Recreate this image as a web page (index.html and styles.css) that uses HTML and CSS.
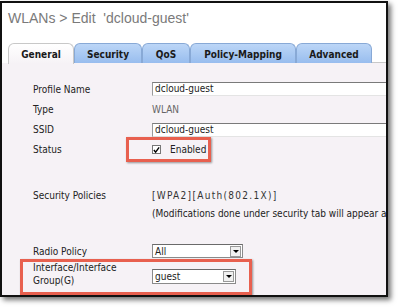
FILE: index.html
```html
<!DOCTYPE html>
<html>
<head>
<meta charset="utf-8">
<link rel="stylesheet" href="styles.css">
</head>
<body>
<div class="frame">
  <div class="header">
    <div class="title">WLANs &gt; Edit &nbsp;'dcloud-guest'</div>
    <div class="tabs">
      <div class="tab active t-general">General</div>
      <div class="tab t-security">Security</div>
      <div class="tab t-qos">QoS</div>
      <div class="tab t-policy">Policy-Mapping</div>
      <div class="tab t-adv">Advanced</div>
      <div class="tab-fill"></div>
    </div>
  </div>
  <div class="content">
    <div class="row r-profile"><div class="label">Profile Name</div><div class="value"><div class="input">dcloud-guest</div></div></div>
    <div class="row r-type"><div class="label">Type</div><div class="value muted">WLAN</div></div>
    <div class="row r-ssid"><div class="label">SSID</div><div class="value"><div class="input">dcloud-guest</div></div></div>
    <div class="row r-status"><div class="label">Status</div><div class="value"><span class="check"><svg width="8" height="8" viewBox="0 0 8 8"><polyline points="1,4 3,6.5 7,1" fill="none" stroke="#000" stroke-width="1.6"/></svg></span><span class="enabled">Enabled</span></div></div>
    <div class="row r-sec"><div class="label">Security Policies</div><div class="value policy">[WPA2][Auth(802.1X)]</div></div>
    <div class="row r-mod"><div class="label"></div><div class="value note">(Modifications done under security tab will appear after applying the changes.)</div></div>
    <div class="row r-radio"><div class="label">Radio Policy</div><div class="value"><div class="select s-radio"><span class="sel-text">All</span><span class="sel-btn"><span class="tri"></span></span></div></div></div>
    <div class="row r-iface"><div class="label">Interface/Interface<br>Group(G)</div><div class="value"><div class="select s-iface"><span class="sel-text">guest</span><span class="sel-btn"><span class="tri"></span></span></div></div></div>
  </div>
  <div class="mark mark-status"></div>
  <div class="mark mark-iface"></div>
</div>
</body>
</html>
```
FILE: styles.css
```css
html, body {
  margin: 0;
  padding: 0;
  background: #ffffff;
}
body {
  width: 400px;
  height: 308px;
  overflow: hidden;
}
.frame {
  position: relative;
  margin: 1px 0 0 0;
  width: 384px;
  height: 292px;
  border: 2px solid #111;
  background: #f6f2f6;
  box-shadow: 3px 3px 5px rgba(0,0,0,0.55);
  overflow: hidden;
  font-family: "DejaVu Sans Condensed", "DejaVu Sans", sans-serif;
  font-size: 10px;
  color: #222;
}
.header {
  background: #ffffff;
  height: 60px;
  display: flex;
  flex-direction: column;
}
.title {
  font-family: "Liberation Sans", Arial, sans-serif;
  font-size: 14px;
  color: #7a7a7a;
  padding: 7px 0 0 6px;
  height: 34px;
  box-sizing: border-box;
  white-space: pre;
}
.tabs {
  display: flex;
  align-items: flex-end;
  padding-left: 6px;
  height: 20px;
  margin-top: 6px;
}
.tab {
  box-sizing: border-box;
  height: 20px;
  border: 1px solid #88a9d6;
  border-bottom: none;
  border-radius: 6px 6px 0 0;
  background: linear-gradient(#bcd6f7, #98bdee);
  font-weight: bold;
  font-size: 10px;
  color: #1a1a1a;
  display: flex;
  align-items: center;
  justify-content: center;
  padding-top: 1px;
}
.tab.active {
  background: linear-gradient(#ffffff, #f6f2f6);
  border-color: #c8c8c8;
  height: 21px;
  margin-bottom: -1px;
}
.t-general { width: 66px; }
.t-security { width: 68px; }
.t-qos { width: 48px; }
.t-policy { width: 106px; }
.t-adv { width: 76px; }
.tab-fill {
  flex: 1;
  border-bottom: 1px solid #c8c8c8;
}
.content {
  padding: 16px 0 0 31px;
  display: flex;
  flex-direction: column;
}
.row {
  display: flex;
  align-items: center;
  height: 20px;
}
.label {
  width: 119px;
  flex: none;
  color: #222;
}
.value {
  flex: none;
  display: flex;
  align-items: center;
  white-space: nowrap;
}
.muted { color: #666; }
.r-type { height: 21px; }
.r-ssid { height: 19px; }
.r-status { height: 21px; }
.r-sec { margin-top: 25px; height: 20px; }
.r-mod { height: 16px; }
.note { font-size: 10px; color: #222; }
.policy { letter-spacing: 1.3px; color: #333; }
.r-radio { margin-top: 20px; height: 20px; }
.r-iface { height: 26px; }
.r-iface .label { line-height: 13px; }
.input {
  box-sizing: border-box;
  width: 240px;
  height: 14px;
  background: #fff;
  border-top: 1px solid #7a7a7a;
  border-left: 1px solid #9a9a9a;
  border-bottom: 1px solid #e4e4e4;
  padding-left: 2px;
  line-height: 12px;
}
.check {
  box-sizing: border-box;
  width: 9px;
  height: 9px;
  border: 1px solid #777;
  background: #fff;
  display: inline-flex;
  align-items: center;
  justify-content: center;
  margin-right: 9px;
}
.check svg { display: block; }
.select {
  box-sizing: border-box;
  height: 14px;
  border: 1px solid #8a8a8a;
  border-top-color: #6a6a6a;
  background: #fff;
  display: flex;
  align-items: center;
  justify-content: space-between;
}
.s-radio { width: 91px; }
.s-iface { width: 84px; height: 15px; margin-top: 5px; }
.sel-text { padding-left: 2px; }
.sel-btn {
  box-sizing: border-box;
  width: 11px;
  height: 11px;
  margin-right: 1px;
  border: 1px solid #999;
  background: #f0f0f0;
  display: flex;
  align-items: center;
  justify-content: center;
}
.tri {
  width: 0;
  height: 0;
  border-left: 3px solid transparent;
  border-right: 3px solid transparent;
  border-top: 3px solid #000;
}
.mark {
  position: absolute;
  border: 3px solid #e8604f;
  box-shadow: 1px 1px 2px rgba(0,0,0,0.4);
}
.mark-status {
  left: 124px;
  top: 134px;
  width: 79px;
  height: 19px;
}
.mark-iface {
  left: 18px;
  top: 256px;
  width: 226px;
  height: 30px;
}
```
